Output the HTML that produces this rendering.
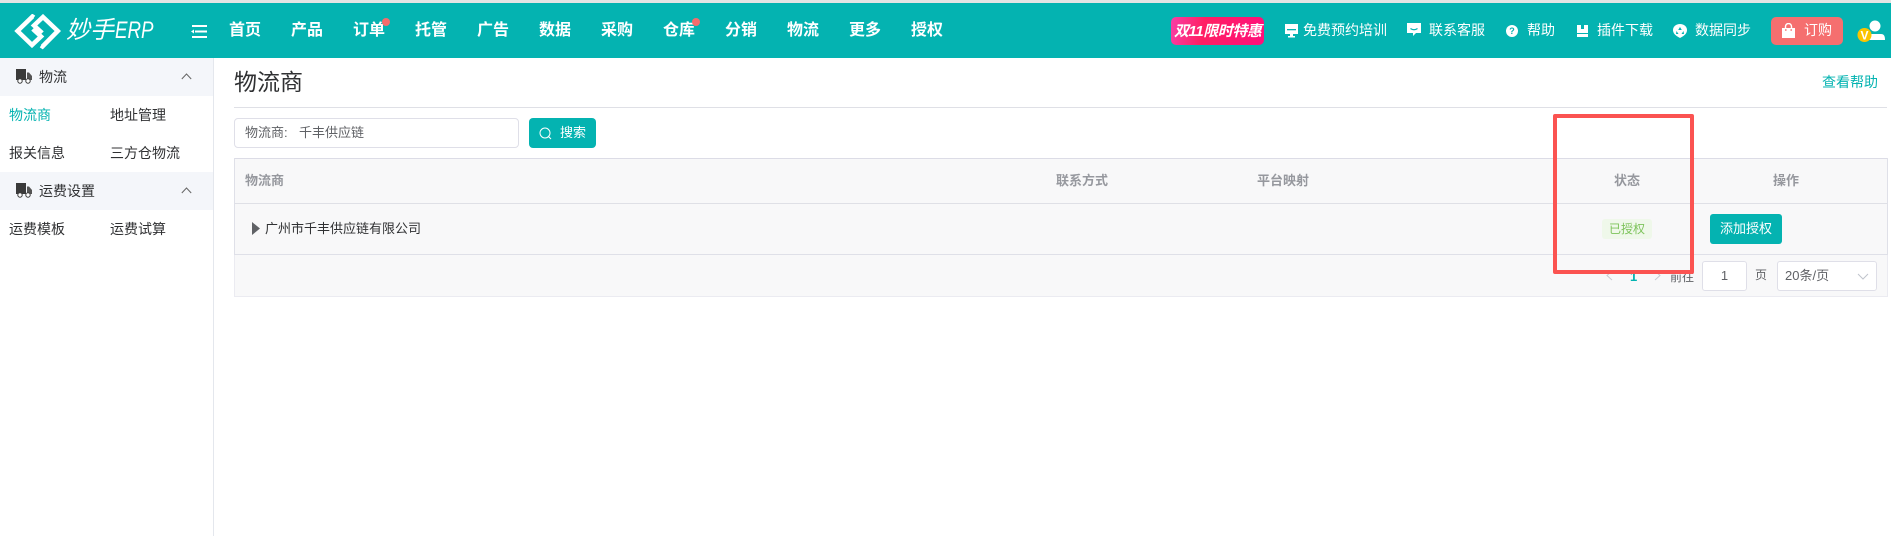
<!DOCTYPE html>
<html lang="zh">
<head>
<meta charset="utf-8">
<title>物流商</title>
<style>
html,body{margin:0;padding:0;width:1891px;height:536px;overflow:hidden;background:#fff;font-family:"Liberation Sans","Noto Sans CJK SC",sans-serif;}
.a{position:absolute;white-space:nowrap;line-height:1;}
.box{position:absolute;box-sizing:border-box;}
.nav{position:absolute;top:21px;font-size:16px;line-height:20px;color:#fff;font-weight:700;white-space:nowrap;}
.top{position:absolute;top:20px;font-size:14px;line-height:20px;color:#fff;white-space:nowrap;}
.side{position:absolute;font-size:14px;line-height:20px;color:#303133;white-space:nowrap;}
.th{position:absolute;top:171px;font-size:13px;line-height:20px;color:#96989e;font-weight:700;white-space:nowrap;}
</style>
</head>
<body>
<div class="box" style="left:0;top:0;width:1891px;height:3px;background:#e4e4e4"></div>
<div class="box" style="left:0;top:3px;width:1891px;height:55px;background:#04b3b1"></div>

<svg class="box" style="left:13px;top:14px" width="50" height="36" viewBox="0 0 50 36" fill="none" stroke="#fff" stroke-width="4.500">
<path d="M21 3.500 L19.500 2.500 L4.500 17 L19 31 L28 22.500 L21.500 16.500 L25 13"/>
<path d="M28 31.500 L29.500 32.500 L44.800 17 L30 3 L21 11.500 L27.500 17.500 L24 21"/>
</svg>
<div class="a" style="left:66px;top:17px;font-size:24px;line-height:28px;color:#fff;font-style:italic;">妙手</div>
<div class="a" style="left:115px;top:17px;font-size:24px;line-height:28px;color:#fff;font-style:italic;transform:scaleX(.78);transform-origin:left center;">ERP</div>
<svg class="box" style="left:191px;top:25px" width="16" height="13" viewBox="0 0 16 13" fill="#fff">
<rect x="1" y="0" width="15" height="2"/><rect x="4" y="5.500" width="12" height="2"/><rect x="1" y="11" width="15" height="2"/><path d="M0 6.500 L3 4.500 V8.500 Z"/>
</svg>

<div class="nav" style="left:229px">首页</div>
<div class="nav" style="left:291px">产品</div>
<div class="nav" style="left:353px">订单</div>
<div class="nav" style="left:415px">托管</div>
<div class="nav" style="left:477px">广告</div>
<div class="nav" style="left:539px">数据</div>
<div class="nav" style="left:601px">采购</div>
<div class="nav" style="left:663px">仓库</div>
<div class="nav" style="left:725px">分销</div>
<div class="nav" style="left:787px">物流</div>
<div class="nav" style="left:849px">更多</div>
<div class="nav" style="left:911px">授权</div>
<div class="box" style="left:382px;top:18px;width:8px;height:8px;border-radius:50%;background:#f56c6c"></div>
<div class="box" style="left:692px;top:18px;width:8px;height:8px;border-radius:50%;background:#f56c6c"></div>

<div class="box" style="left:1171px;top:17px;width:93px;height:28px;border-radius:5px;background:linear-gradient(100deg,#f83fa6 0%,#ff1f63 35%,#ff0f7b 100%);"></div>
<div class="a" style="left:1174px;top:22px;font-size:15px;line-height:20px;color:#fff;font-style:italic;font-weight:700;letter-spacing:-.45px">双11限时特惠</div>

<svg class="box" style="left:1285px;top:24px" width="13" height="14" viewBox="0 0 13 14" fill="#fff">
<path d="M0 0h13v10H0z"/><rect x="2" y="5" width="9" height="1.300" fill="#04b3b1"/><rect x="5" y="10" width="3" height="2"/><rect x="3" y="12" width="7" height="1.500"/>
</svg>
<div class="top" style="left:1303px">免费预约培训</div>
<svg class="box" style="left:1407px;top:23px" width="15" height="14" viewBox="0 0 15 14" fill="#fff">
<path d="M0 0h14v10h-5l-3 3v-3H0z"/><path d="M3.500 5.500q3.500 2.500 7 0" stroke="#04b3b1" stroke-width="1.200" fill="none"/>
</svg>
<div class="top" style="left:1429px">联系客服</div>
<div class="box" style="left:1506px;top:25px;width:12px;height:12px;border-radius:50%;background:#fff;color:#04b3b1;font:700 9px/12px 'Liberation Sans',sans-serif;text-align:center">?</div>
<div class="top" style="left:1527px">帮助</div>
<svg class="box" style="left:1577px;top:25px" width="11" height="12" viewBox="0 0 11 12" fill="#fff">
<path d="M0 0h11v12H0z"/><rect x="4" y="0" width="3" height="4" fill="#04b3b1"/><rect x="0" y="8" width="11" height="1" fill="#04b3b1"/>
</svg>
<div class="top" style="left:1597px">插件下载</div>
<svg class="box" style="left:1673px;top:24px" width="14" height="14" viewBox="0 0 14 14" fill="#fff">
<path d="M7 0C11 0 14 2.500 14 6c0 3-2 5.500-7 8C2 11.500 0 9 0 6c0-3.500 3-6 7-6z"/><path d="M7 3l1.800 3H5.200z M3.500 7l2 3H3z M10.500 7l.5 3H8.500z" fill="#04b3b1"/>
</svg>
<div class="top" style="left:1695px">数据同步</div>

<div class="box" style="left:1771px;top:17px;width:72px;height:28px;border-radius:5px;background:#f56f6f"></div>
<svg class="box" style="left:1782px;top:23px" width="13" height="15" viewBox="0 0 13 15" fill="#fff">
<path d="M0 5h13v10H0z"/><path d="M3.500 5V3.500a3 3 0 0 1 6 0V5" stroke="#fff" stroke-width="1.400" fill="none"/><circle cx="3.800" cy="7" r=".9" fill="#f56f6f"/><circle cx="9.200" cy="7" r=".9" fill="#f56f6f"/>
</svg>
<div class="top" style="left:1804px">订购</div>

<svg class="box" style="left:1857px;top:20px" width="34" height="26" viewBox="0 0 34 26">
<circle cx="18" cy="6" r="5.500" fill="#fff"/>
<path d="M12 14h12c3 0 4 2 4 6H12z" fill="#fff"/>
<circle cx="7.500" cy="15" r="7" fill="#fbc400"/>
<text x="7.500" y="19.500" font-size="12" font-weight="700" fill="#fff" text-anchor="middle" font-family="Liberation Sans, sans-serif">V</text>
</svg>

<!-- sidebar -->
<div class="box" style="left:0;top:58px;width:214px;height:478px;background:#fff;border-right:1px solid #e4e7ed"></div>
<div class="box" style="left:0;top:58px;width:213px;height:38px;background:#f4f6fa"></div>
<div class="box" style="left:0;top:172px;width:213px;height:38px;background:#f4f6fa"></div>
<svg class="box" style="left:16px;top:69px" width="16" height="15" viewBox="0 0 16 15" fill="#3a3a3a">
<path d="M0 0h10v11H0z"/><path d="M11 3.500h2l3 3.500v4h-5z" fill="#555"/><circle cx="4" cy="12" r="2.200" stroke="#3a3a3a" fill="#fff" stroke-width="1"/><circle cx="12" cy="12" r="2.200" stroke="#3a3a3a" fill="#fff" stroke-width="1"/>
</svg>
<div class="side" style="left:39px;top:67px">物流</div>
<svg class="box" style="left:181px;top:73px" width="11" height="7" viewBox="0 0 11 7" fill="none" stroke="#666" stroke-width="1"><path d="M.8 6 L5.500 1 L10.200 6"/></svg>
<svg class="box" style="left:16px;top:183px" width="16" height="15" viewBox="0 0 16 15" fill="#3a3a3a">
<path d="M0 0h10v11H0z"/><path d="M11 3.500h2l3 3.500v4h-5z" fill="#555"/><circle cx="4" cy="12" r="2.200" stroke="#3a3a3a" fill="#fff" stroke-width="1"/><circle cx="12" cy="12" r="2.200" stroke="#3a3a3a" fill="#fff" stroke-width="1"/>
</svg>
<div class="side" style="left:39px;top:181px">运费设置</div>
<svg class="box" style="left:181px;top:187px" width="11" height="7" viewBox="0 0 11 7" fill="none" stroke="#666" stroke-width="1"><path d="M.8 6 L5.500 1 L10.200 6"/></svg>
<div class="side" style="left:9px;top:105px;color:#04b3b1">物流商</div>
<div class="side" style="left:110px;top:105px">地址管理</div>
<div class="side" style="left:9px;top:143px">报关信息</div>
<div class="side" style="left:110px;top:143px">三方仓物流</div>
<div class="side" style="left:9px;top:219px">运费模板</div>
<div class="side" style="left:110px;top:219px">运费试算</div>

<!-- content -->
<div class="a" style="left:234px;top:67px;font-size:23px;line-height:30px;color:#303133">物流商</div>
<div class="a" style="left:1822px;top:72px;font-size:14px;line-height:20px;color:#04b3b1">查看帮助</div>
<div class="box" style="left:234px;top:107px;width:1653px;height:1px;background:#dfe0e6"></div>

<div class="box" style="left:234px;top:118px;width:285px;height:30px;border:1px solid #dfdfe8;border-radius:4px;background:#fff"></div>
<div class="a" style="left:245px;top:123px;font-size:13px;line-height:20px;color:#606266">物流商:</div>
<div class="a" style="left:299px;top:123px;font-size:13px;line-height:20px;color:#606266">千丰供应链</div>
<div class="box" style="left:529px;top:118px;width:67px;height:30px;border-radius:4px;background:#04b3b1"></div>
<svg class="box" style="left:539px;top:127px" width="13" height="13" viewBox="0 0 13 13" fill="none" stroke="#fff" stroke-width="1"><circle cx="6" cy="6" r="5"/><path d="M9.500 9.500 L12 12"/></svg>
<div class="a" style="left:560px;top:123px;font-size:13px;line-height:20px;color:#fff">搜索</div>

<div class="box" style="left:234px;top:158px;width:1654px;height:139px;background:#f8f8f9;border:1px solid #ebebf1;border-top-color:#dcdce6"></div>
<div class="box" style="left:234px;top:203px;width:1654px;height:1px;background:#dfe0e6"></div>
<div class="box" style="left:234px;top:254px;width:1654px;height:1px;background:#dfe0e8"></div>
<div class="box" style="left:234px;top:158px;width:1px;height:97px;background:#dfe0e8"></div>
<div class="box" style="left:1887px;top:158px;width:1px;height:97px;background:#dfe0e8"></div>
<div class="th" style="left:245px">物流商</div>
<div class="th" style="left:1056px">联系方式</div>
<div class="th" style="left:1257px">平台映射</div>
<div class="th" style="left:1614px">状态</div>
<div class="th" style="left:1773px">操作</div>

<svg class="box" style="left:252px;top:222px" width="9" height="13" viewBox="0 0 9 13" fill="#606266"><path d="M0 0 L8 6.500 L0 13 Z"/></svg>
<div class="a" style="left:265px;top:219px;font-size:13px;line-height:20px;color:#303133">广州市千丰供应链有限公司</div>

<div class="box" style="left:1602px;top:219px;width:50px;height:20px;border-radius:3px;background:#eff8ea"></div>
<div class="a" style="left:1609px;top:219px;font-size:12px;line-height:20px;color:#7dc35b">已授权</div>
<div class="box" style="left:1710px;top:214px;width:72px;height:30px;border-radius:3px;background:#04b3b1"></div>
<div class="a" style="left:1720px;top:219px;font-size:13px;line-height:20px;color:#fff">添加授权</div>

<svg class="box" style="left:1606px;top:270px" width="7" height="11" viewBox="0 0 7 11" fill="none" stroke="#c8cbd1" stroke-width="1"><path d="M6 1 L1 5.500 L6 10"/></svg>
<div class="a" style="left:1630px;top:267px;font-size:13px;line-height:20px;color:#04b3b1;font-weight:700">1</div>
<svg class="box" style="left:1654px;top:270px" width="7" height="11" viewBox="0 0 7 11" fill="none" stroke="#c8cbd1" stroke-width="1"><path d="M1 1 L6 5.500 L1 10"/></svg>
<div class="a" style="left:1670px;top:267px;font-size:12px;line-height:20px;color:#606266">前往</div>
<div class="box" style="left:1702px;top:261px;width:45px;height:30px;border:1px solid #dfdfe8;border-radius:3px;background:#fff;font-size:13px;line-height:28px;text-align:center;color:#606266">1</div>
<div class="a" style="left:1755px;top:265px;font-size:12px;line-height:20px;color:#606266">页</div>
<div class="box" style="left:1777px;top:261px;width:100px;height:30px;border:1px solid #dfdfe8;border-radius:3px;background:#fff"></div>
<div class="a" style="left:1785px;top:266px;font-size:13px;line-height:20px;color:#606266">20条/页</div>
<svg class="box" style="left:1857px;top:273px" width="12" height="7" viewBox="0 0 12 7" fill="none" stroke="#c0c4cc" stroke-width="1"><path d="M1 1 L6 6 L11 1"/></svg>

<!-- red annotation -->
<div class="box" style="left:1553px;top:114px;width:141px;height:160px;border:4px solid #fb5351;border-radius:2px"></div>
</body>
</html>
